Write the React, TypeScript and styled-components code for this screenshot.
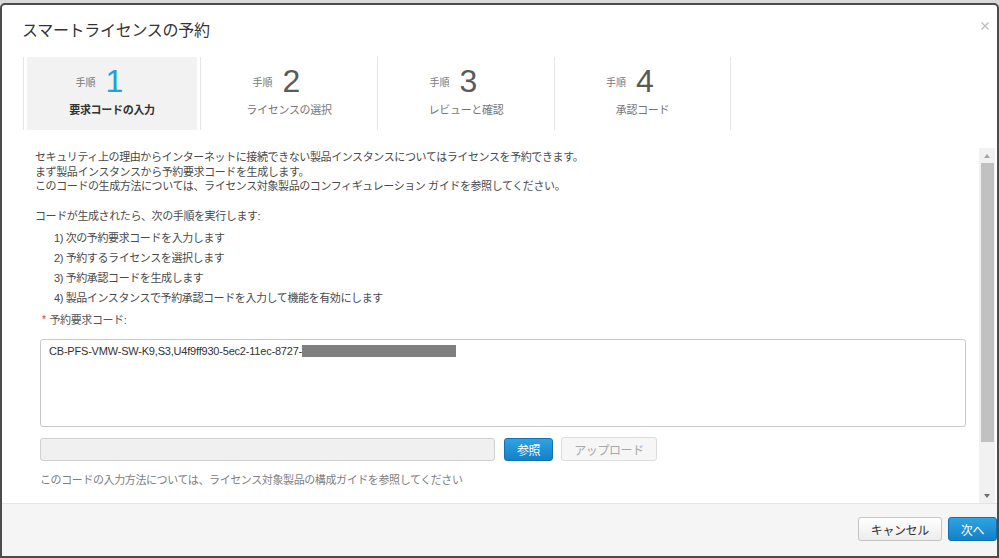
import styled, { createGlobalStyle } from "styled-components";

const GlobalStyle = createGlobalStyle`
  html, body {
    margin: 0;
    padding: 0;
    background: #dcdcdc;
  }
  body {
    font-family: "Liberation Sans", "Noto Sans CJK JP", sans-serif;
    color: #444;
  }
  * {
    box-sizing: border-box;
  }
`;

const Shell = styled.div`
  width: 999px;
  height: 558px;
  padding-top: 3px;
  background: #d9d9d9;
`;

const Frame = styled.div`
  height: 555px;
  border: 2px solid #4c4c4c;
  border-radius: 5px 5px 0 0;
  background: #fff;
  display: flex;
  flex-direction: column;
  overflow: hidden;
`;

const Header = styled.div`
  height: 52px;
  display: flex;
  align-items: flex-start;
  padding: 15px 8px 0 20px;
`;

const Title = styled.h1`
  margin: 0;
  font-size: 16px;
  line-height: 22px;
  font-weight: 400;
  color: #333;
  letter-spacing: -0.3px;
`;

const Close = styled.button`
  margin-left: auto;
  margin-top: 2px;
  border: 0;
  padding: 0;
  background: none;
  width: 8px;
  height: 8px;
  display: flex;
`;

const Steps = styled.div`
  display: flex;
  margin: 0 0 18px 21px;
  height: 73px;
`;

const Step = styled.div<{ $last?: boolean }>`
  width: 177px;
  border-left: 1px solid #e6e6e6;
  border-right: ${(p) => (p.$last ? "1px solid #e6e6e6" : "0")};
  padding: 0 3px;
`;

const StepInner = styled.div<{ $active?: boolean }>`
  height: 100%;
  background: ${(p) => (p.$active ? "#f2f2f2" : "transparent")};
  display: flex;
  flex-direction: column;
  align-items: center;
  padding-top: 8px;
`;

const StepTop = styled.div`
  display: flex;
  align-items: center;
  gap: 10px;
  height: 32px;
  padding-right: 25px;
`;

const StepWord = styled.span`
  font-size: 10px;
  color: #777;
`;

const StepNum = styled.span<{ $active?: boolean }>`
  font-size: 32px;
  line-height: 32px;
  color: ${(p) => (p.$active ? "#22a0d8" : "#5a5a5a")};
`;

const StepLabel = styled.div<{ $active?: boolean }>`
  margin-top: 6px;
  font-size: 11px;
  line-height: 14px;
  letter-spacing: -0.3px;
  color: ${(p) => (p.$active ? "#333" : "#777")};
  font-weight: ${(p) => (p.$active ? 700 : 400)};
`;

const Body = styled.div`
  flex: 1;
  display: flex;
  min-height: 0;
`;

const Content = styled.div`
  flex: 1;
  padding: 2px 13px 0 33px;
  font-size: 11px;
  letter-spacing: -0.4px;
  color: #4a4a4a;
`;

const Para = styled.p<{ $gap?: number }>`
  margin: ${(p) => p.$gap ?? 0}px 0 0;
  line-height: 14.5px;
`;

const List = styled.ol`
  list-style: none;
  margin: 5px 0 0;
  padding: 0 0 0 19px;
`;

const Item = styled.li`
  line-height: 20px;
`;

const Form = styled.div`
  padding-left: 5px;
`;

const FieldLabel = styled.div`
  margin-top: 5px;
  line-height: 14px;
  color: #555;
  display: flex;
  gap: 4px;
  padding-left: 2px;
`;

const Required = styled.span`
  color: #d4302b;
  font-size: 10px;
`;

const CodeBox = styled.div`
  margin-top: 12px;
  height: 88px;
  border: 1px solid #c8c8c8;
  border-radius: 3px;
  padding: 4px 8px;
  line-height: 14px;
  color: #333;
  letter-spacing: -0.2px;
  display: flex;
  align-items: flex-start;
`;

const Redacted = styled.span`
  display: inline-block;
  width: 154px;
  height: 12px;
  margin-top: 1px;
  background: #7f7f7f;
`;

const FileRow = styled.div`
  margin-top: 10px;
  display: flex;
  align-items: center;
  gap: 8px;
`;

const FileField = styled.div`
  width: 455px;
  height: 23px;
  margin-right: 1px;
  border: 1px solid #cfcfcf;
  border-radius: 3px;
  background: #f0f0f0;
`;

const Button = styled.button<{ $primary?: boolean; $disabled?: boolean }>`
  height: ${(p) => (p.$primary ? "23px" : "24px")};
  padding: 0 12px;
  border-radius: 3px;
  font-family: inherit;
  font-size: 12px;
  letter-spacing: -0.4px;
  cursor: pointer;
  border: 1px solid
    ${(p) => (p.$primary ? "#1370b3" : p.$disabled ? "#dcdcdc" : "#c4c4c4")};
  color: ${(p) => (p.$primary ? "#fff" : p.$disabled ? "#a8a8a8" : "#333")};
  background: ${(p) =>
    p.$primary
      ? "linear-gradient(#2fa3e3, #1380c8)"
      : p.$disabled
      ? "#f6f6f6"
      : "linear-gradient(#ffffff, #ececec)"};
`;

const Help = styled.p`
  margin: 12px 0 0;
  line-height: 14px;
  color: #808080;
`;

const Scrollbar = styled.div`
  width: 16px;
  margin-right: 2px;
  background: #f1f1f1;
  display: flex;
  flex-direction: column;
  align-items: center;
`;

const Arrow = styled.div<{ $down?: boolean }>`
  height: 15px;
  display: flex;
  align-items: center;
  justify-content: center;
  &::after {
    content: "";
    border-left: 3.5px solid transparent;
    border-right: 3.5px solid transparent;
    ${(p) =>
      p.$down ? "border-top: 4px solid #6e6e6e;" : "border-bottom: 4px solid #a6a6a6;"}
  }
`;

const Thumb = styled.div`
  width: 13px;
  height: 279px;
  background: #c1c1c1;
`;

const Footer = styled.div`
  height: 53px;
  border-top: 1px solid #e4e4e4;
  background: #f5f5f5;
  display: flex;
  justify-content: flex-end;
  align-items: center;
  gap: 6px;
  padding: 0 0 2px;
`;

const steps = [
  { n: 1, label: "要求コードの入力" },
  { n: 2, label: "ライセンスの選択" },
  { n: 3, label: "レビューと確認" },
  { n: 4, label: "承認コード" },
];

export default function App() {
  return (
    <Shell>
      <GlobalStyle />
      <Frame>
        <Header>
          <Title>スマートライセンスの予約</Title>
          <Close aria-label="close">
            <svg width="8" height="8" viewBox="0 0 8 8">
              <path d="M0.5 0.5 L7.5 7.5 M7.5 0.5 L0.5 7.5" stroke="#bdbdbd" strokeWidth="1.4" />
            </svg>
          </Close>
        </Header>

        <Steps>
          {steps.map((s, i) => (
            <Step key={s.n} $last={i === steps.length - 1}>
              <StepInner $active={i === 0}>
                <StepTop>
                  <StepWord>手順</StepWord>
                  <StepNum $active={i === 0}>{s.n}</StepNum>
                </StepTop>
                <StepLabel $active={i === 0}>{s.label}</StepLabel>
              </StepInner>
            </Step>
          ))}
        </Steps>

        <Body>
          <Content>
            <Para>
              セキュリティ上の理由からインターネットに接続できない製品インスタンスについてはライセンスを予約できます。
              <br />
              まず製品インスタンスから予約要求コードを生成します。
              <br />
              このコードの生成方法については、ライセンス対象製品のコンフィギュレーション ガイドを参照してください。
            </Para>
            <Para $gap={15}>コードが生成されたら、次の手順を実行します:</Para>
            <List>
              <Item>1) 次の予約要求コードを入力します</Item>
              <Item>2) 予約するライセンスを選択します</Item>
              <Item>3) 予約承認コードを生成します</Item>
              <Item>4) 製品インスタンスで予約承認コードを入力して機能を有効にします</Item>
            </List>
            <Form>
              <FieldLabel>
                <Required>*</Required>
                予約要求コード:
              </FieldLabel>
              <CodeBox>
                CB-PFS-VMW-SW-K9,S3,U4f9ff930-5ec2-11ec-8727-
                <Redacted />
              </CodeBox>
              <FileRow>
                <FileField />
                <Button $primary>参照</Button>
                <Button $disabled>アップロード</Button>
              </FileRow>
              <Help>このコードの入力方法については、ライセンス対象製品の構成ガイドを参照してください</Help>
            </Form>
          </Content>
          <Scrollbar>
            <Arrow />
            <Thumb />
            <div style={{ flex: 1 }} />
            <Arrow $down />
          </Scrollbar>
        </Body>

        <Footer>
          <Button>キャンセル</Button>
          <Button $primary style={{ height: 24 }}>次へ</Button>
        </Footer>
      </Frame>
    </Shell>
  );
}
